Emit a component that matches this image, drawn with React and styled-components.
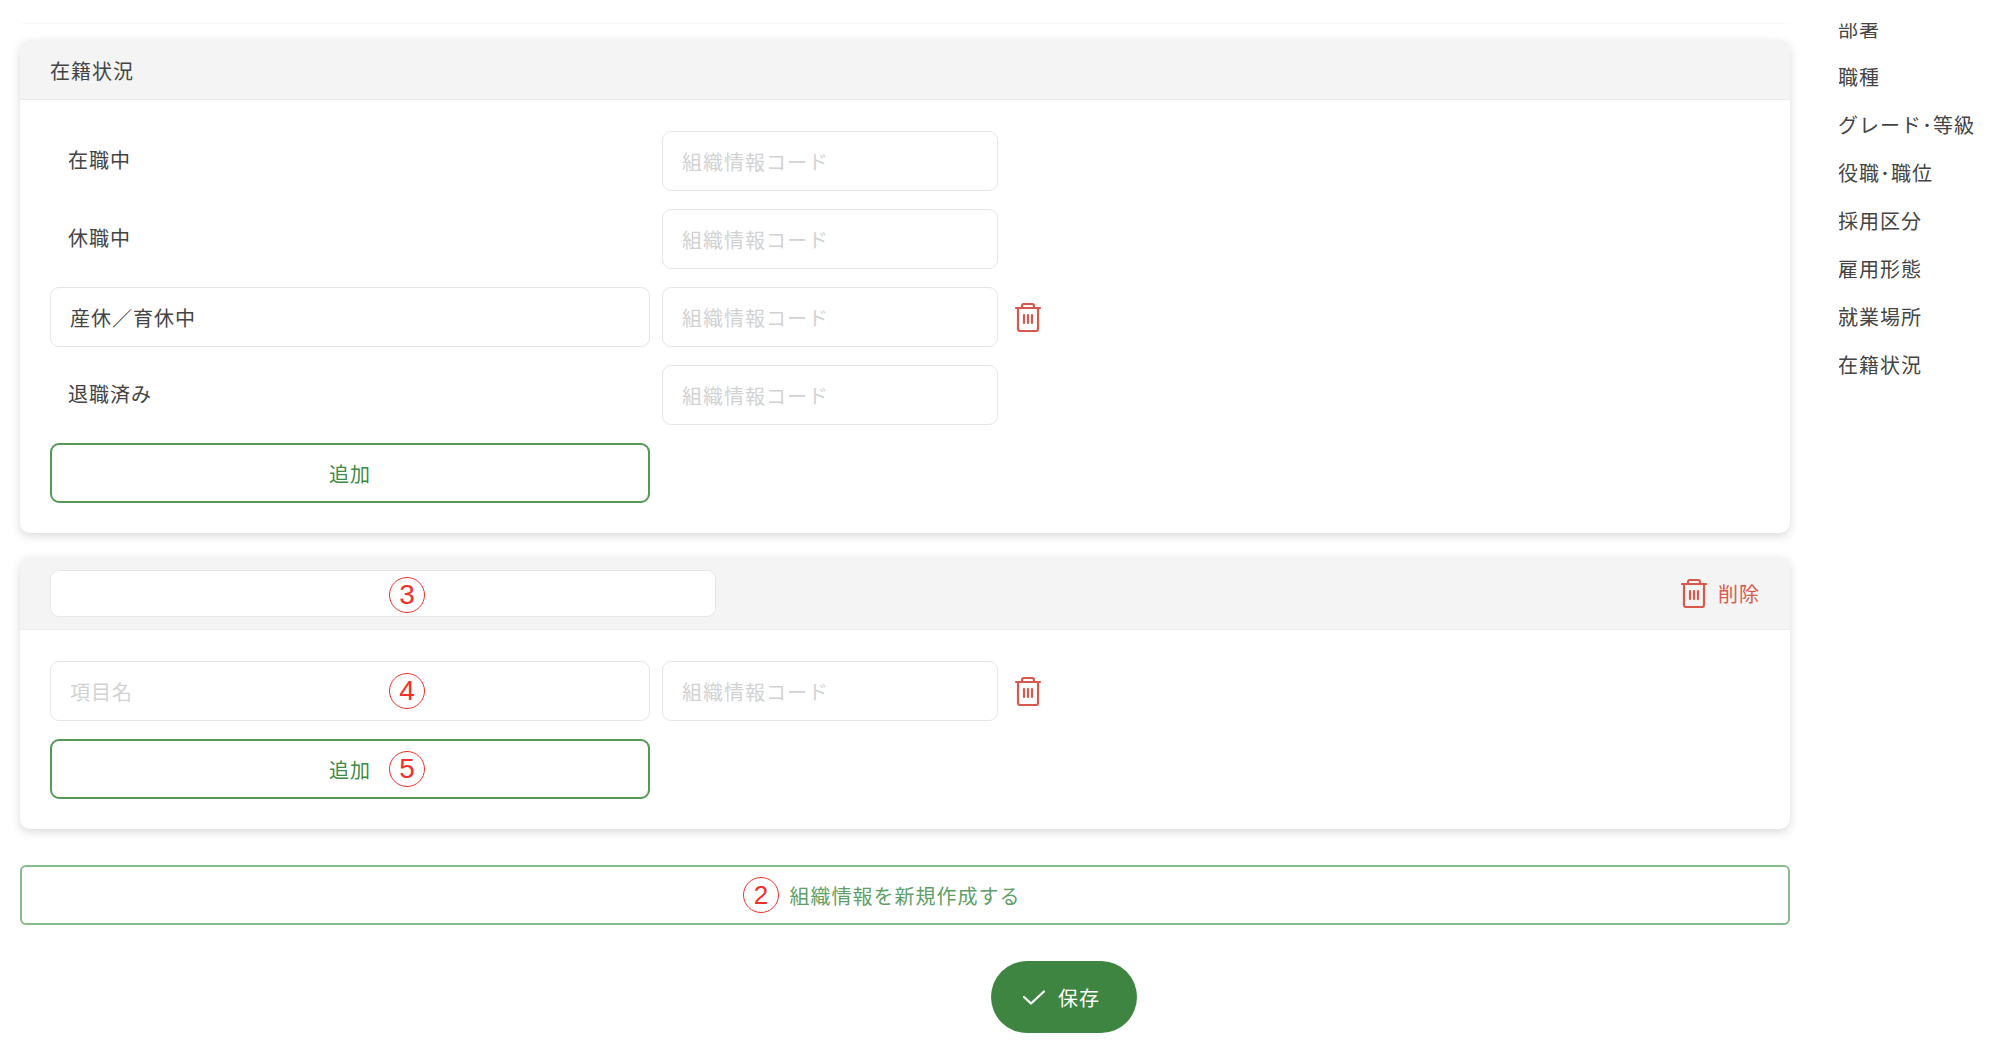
import React from "react";
import styled, { createGlobalStyle } from "styled-components";

const GlobalStyle = createGlobalStyle`
  html, body {
    margin: 0;
    height: 100%;
    background: #fff;
    overflow: hidden;
  }
  * {
    box-sizing: border-box;
  }
  body, input, button {
    font-family: "Noto Sans CJK JP", "Noto Sans", sans-serif;
    font-size: 20px;
    letter-spacing: 1px;
    color: #444;
  }
`;

const Page = styled.div`
  display: flex;
  width: 2000px;
  height: 1056px;
  overflow: hidden;
`;

const Main = styled.main`
  width: 1770px;
  margin-left: 20px;
  flex-shrink: 0;
  display: flex;
  flex-direction: column;
`;

const PreviousCardEdge = styled.div`
  height: 24px;
  margin-bottom: 16px;
  border-bottom: 1px solid #fafafa;
`;

const Card = styled.section`
  border-radius: 10px;
  background: #fff;
  box-shadow: 0 3px 10px rgba(0, 0, 0, 0.15);
  margin-bottom: ${(p) => p.$gap}px;
  overflow: hidden;
`;

const CardHeader = styled.header`
  display: flex;
  align-items: center;
  justify-content: space-between;
  background: #f4f4f4;
  border-bottom: 1px solid #ececec;
  padding: 0 30px;
  height: ${(p) => p.$height}px;
`;

const CardTitle = styled.span`
  padding-top: 2px;
`;

const CardBody = styled.div`
  display: flex;
  flex-direction: column;
  gap: 18px;
  padding: 31px 30px 30px;
`;

const Row = styled.div`
  display: flex;
  align-items: center;
  height: 60px;
`;

const Label = styled.div`
  width: 600px;
  padding: 0 0 3px 18px;
`;

const Field = styled.div`
  position: relative;
  width: ${(p) => p.$width}px;
  margin-left: ${(p) => p.$offset || 0}px;
  flex-shrink: 0;
`;

const TextInput = styled.input`
  display: block;
  width: 100%;
  height: ${(p) => p.$height || 60}px;
  padding: 0 19px;
  border: 1.5px solid #e6e6e6;
  border-radius: 9px;
  background: #fff;
  outline: none;

  &::placeholder {
    color: #d2d2d2;
    opacity: 1;
  }
`;

const IconButton = styled.button`
  display: flex;
  margin-left: 17px;
  padding: 0;
  border: 0;
  background: none;
`;

const DeleteButton = styled.button`
  display: flex;
  align-items: center;
  gap: 11px;
  padding: 0;
  border: 0;
  background: none;
  color: #d9584c;
`;

const AddButton = styled.button`
  position: relative;
  display: block;
  width: 600px;
  height: 60px;
  border: 2px solid #559858;
  border-radius: 9px;
  background: #fff;
  color: #3f8a45;
`;

const NewButton = styled.button`
  position: relative;
  display: block;
  width: 100%;
  height: 60px;
  margin-bottom: 36px;
  border: 2px solid #86bb8b;
  border-radius: 6px;
  background: #fff;
  color: #5fa066;
`;

const SaveButton = styled.button`
  display: flex;
  align-items: center;
  justify-content: center;
  gap: 13px;
  align-self: flex-start;
  margin-left: 971px;
  width: 146px;
  height: 72px;
  padding: 0 5px 0 0;
  border: 0;
  border-radius: 36px;
  background: #3d8540;
  color: #fff;
`;

const Marker = styled.span`
  position: absolute;
  left: ${(p) => p.$left}px;
  top: calc(50% + ${(p) => p.$shift || 0}px);
  transform: translateY(-50%);
  display: flex;
  align-items: center;
  justify-content: center;
  width: 36px;
  height: 36px;
  border: 1.5px solid #f0302a;
  border-radius: 50%;
  font-family: "Liberation Sans", sans-serif;
  font-size: ${(p) => p.$size || 28}px;
  letter-spacing: 0;
  color: #f0302a;
`;

const SideNav = styled.nav`
  margin: 23px 0 0 49px;
  overflow: hidden;
  height: 400px;
`;

const SideList = styled.ul`
  list-style: none;
  margin: -17px 0 0 -1px;
  padding: 0;
`;

const SideItem = styled.li`
  height: 48px;
  line-height: 46px;
  white-space: nowrap;
`;

const TrashIcon = () => (
  <svg width="26" height="29" viewBox="0 0 26 29" fill="none" stroke="#d9584c" strokeWidth="2.2" strokeLinecap="round" strokeLinejoin="round">
    <path d="M7 5V3a2 2 0 0 1 2-2h8a2 2 0 0 1 2 2v2" />
    <path d="M1 5h24" />
    <path d="M3 5v21a2 2 0 0 0 2 2h16a2 2 0 0 0 2-2V5" />
    <path d="M9 12v8M13 12v8M17 12v8" />
  </svg>
);

const CheckIcon = () => (
  <svg width="22" height="15" viewBox="0 0 22 15" fill="none" stroke="#fff" strokeWidth="2.2" strokeLinecap="round" strokeLinejoin="round">
    <path d="M1 7 8 13.5 21 1.5" />
  </svg>
);

const CodeField = () => (
  <Field $width={336} $offset={12}>
    <TextInput placeholder="組織情報コード" />
  </Field>
);

const statusLabels = ["部署", "職種", "グレード･等級", "役職･職位", "採用区分", "雇用形態", "就業場所", "在籍状況"];

const App = () => {
  return (
    <Page>
      <GlobalStyle />
      <Main>
        <PreviousCardEdge />

        <Card $gap={24}>
          <CardHeader $height={60}>
            <CardTitle>在籍状況</CardTitle>
          </CardHeader>
          <CardBody>
            <Row>
              <Label>在職中</Label>
              <CodeField />
            </Row>
            <Row>
              <Label>休職中</Label>
              <CodeField />
            </Row>
            <Row>
              <Field $width={600}>
                <TextInput defaultValue="産休／育休中" />
              </Field>
              <CodeField />
              <IconButton><TrashIcon /></IconButton>
            </Row>
            <Row>
              <Label>退職済み</Label>
              <CodeField />
            </Row>
            <AddButton>追加</AddButton>
          </CardBody>
        </Card>

        <Card $gap={36}>
          <CardHeader $height={73}>
            <Field $width={666}>
              <TextInput $height={47} />
              <Marker $left={339} $shift={1.5}>3</Marker>
            </Field>
            <DeleteButton>
              <TrashIcon />
              削除
            </DeleteButton>
          </CardHeader>
          <CardBody>
            <Row>
              <Field $width={600}>
                <TextInput placeholder="項目名" />
                <Marker $left={339}>4</Marker>
              </Field>
              <CodeField />
              <IconButton><TrashIcon /></IconButton>
            </Row>
            <AddButton>
              追加
              <Marker $left={337}>5</Marker>
            </AddButton>
          </CardBody>
        </Card>

        <NewButton>
          <Marker $left={721} $size={26}>2</Marker>
          組織情報を新規作成する
        </NewButton>

        <SaveButton>
          <CheckIcon />
          保存
        </SaveButton>
      </Main>

      <SideNav>
        <SideList>
          {statusLabels.map((label) => (
            <SideItem key={label}>{label}</SideItem>
          ))}
        </SideList>
      </SideNav>
    </Page>
  );
};

export default App;
